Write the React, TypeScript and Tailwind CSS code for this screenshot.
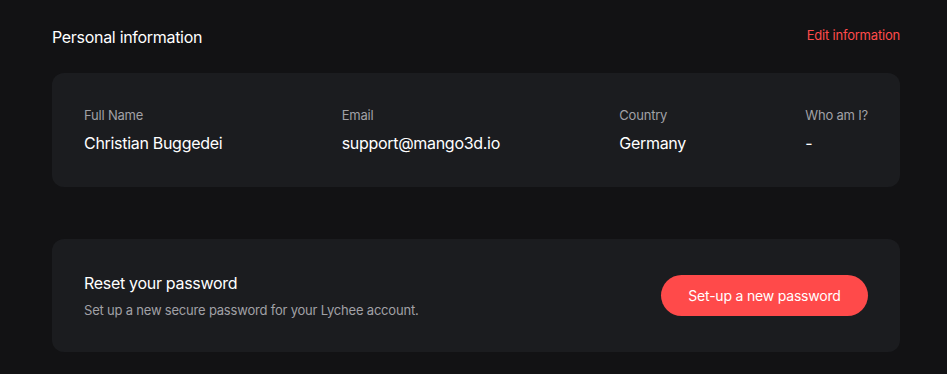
export default function App() {
  return (
    <div className="min-h-[374px] w-full bg-[#121214] pl-[52px] pr-[47px] pt-[26px] font-['Inter','Liberation_Sans',sans-serif] text-white">
      <div className="flex items-start justify-between">
        <h2 className="text-[16px] font-normal leading-[22px] tracking-[-0.3px]">Personal information</h2>
        <button className="text-[13px] leading-[18px] tracking-[-0.2px] text-[#ff4b4b]">Edit information</button>
      </div>

      <div className="mt-[25px] flex h-[114px] items-center justify-between rounded-[12px] bg-[#1b1c1f] px-8">
        {[
          ["Full Name", "Christian Buggedei"],
          ["Email", "support@mango3d.io"],
          ["Country", "Germany"],
          ["Who am I?", "-"],
        ].map(([label, value]) => (
          <div key={label} className="flex flex-col">
            <span className="text-[13px] leading-[18px] tracking-[-0.2px] text-[#a1a1a6]">{label}</span>
            <span className="mt-[8px] text-[16px] font-normal leading-[22px] tracking-[-0.3px]">{value}</span>
          </div>
        ))}
      </div>

      <div className="mt-[52px] flex h-[113px] items-center justify-between rounded-[12px] bg-[#1b1c1f] px-8">
        <div className="flex flex-col">
          <span className="text-[16px] font-normal leading-[22px] tracking-[-0.3px]">Reset your password</span>
          <span className="mt-[7px] text-[13px] leading-[18px] tracking-[-0.2px] text-[#a1a1a6]">
            Set up a new secure password for your Lychee account.
          </span>
        </div>
        <button className="h-[41px] w-[207px] rounded-full bg-[#ff4a4a] text-[14px] font-normal tracking-[-0.2px] text-white">
          Set-up a new password
        </button>
      </div>
    </div>
  );
}
